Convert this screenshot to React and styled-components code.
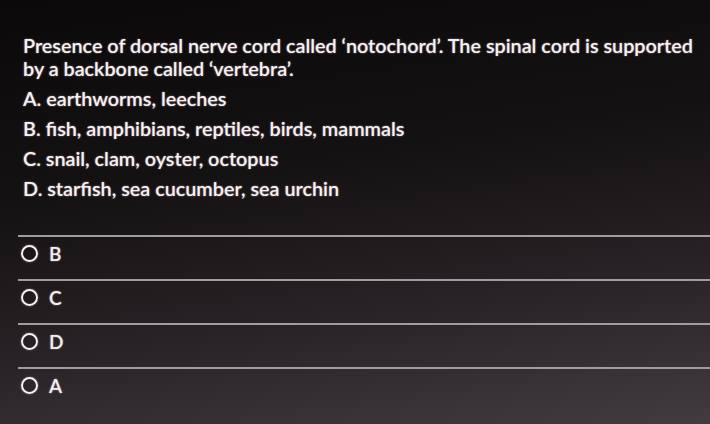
import React from 'react'
import styled, { createGlobalStyle } from 'styled-components'

const GlobalStyle = createGlobalStyle`
	html, body {
		margin: 0;
		padding: 0;
		width: 100%;
		height: 100%;
	}
	body {
		background: linear-gradient(172deg, #0b090a 0%, #141112 38%, #282326 70%, #423c41 100%);
		font-family: Lato, "Open Sans", sans-serif;
		color: #f6f1f3;
		overflow: hidden;
	}
`;

const Page = styled.div`
	width: 710px;
	height: 424px;
	padding: 34px 0 0 0;
	box-sizing: border-box;
`;

const Question = styled.div`
	padding-left: 23px;
	padding-right: 4px;
`;

const QuestionText = styled.p`
	margin: 0 0 3px;
	font-size: 19.8px;
	font-weight: 600;
	line-height: 23px;
	white-space: nowrap;
	text-shadow: 0 0 2px rgba(255, 220, 235, 0.55);
`;

const Choice = styled.p`
	margin: 0;
	font-size: 19.8px;
	font-weight: 600;
	line-height: 30px;
	text-shadow: 0 0 2px rgba(255, 220, 235, 0.55);
`;

const Answers = styled.div`
	margin-top: 32px;
	padding-left: 18px;
`;

const AnswerRow = styled.label`
	display: flex;
	align-items: center;
	gap: 11px;
	height: 44px;
	box-sizing: border-box;
	border-top: 2px solid #a29c9e;
	padding: 0 0 10px 3px;
	font-size: 19px;
	font-weight: 600;
	color: #f4eef1;
	text-shadow: 0 0 2px rgba(255, 220, 235, 0.5);
`;

const Radio = styled.span`
	width: 13px;
	height: 13px;
	border: 2px solid #f7f1f4;
	border-radius: 50%;
	box-shadow: 0 0 2px rgba(255, 220, 235, 0.5);
	flex-shrink: 0;
`;

const choices = [
	'A. earthworms, leeches',
	'B. fish, amphibians, reptiles, birds, mammals',
	'C. snail, clam, oyster, octopus',
	'D. starfish, sea cucumber, sea urchin',
];

const answers = ['B', 'C', 'D', 'A'];

const App = () => {
	return (
		<>
			<GlobalStyle />
			<Page>
				<Question>
					<QuestionText>
						Presence of dorsal nerve cord called ‘notochord’. The spinal cord is supported
						<br />
						by a backbone called ‘vertebra’.
					</QuestionText>
					{choices.map((c) => (
						<Choice key={c}>{c}</Choice>
					))}
				</Question>
				<Answers>
					{answers.map((a) => (
						<AnswerRow key={a}>
							<Radio />
							{a}
						</AnswerRow>
					))}
				</Answers>
			</Page>
		</>
	)
}

export default App
